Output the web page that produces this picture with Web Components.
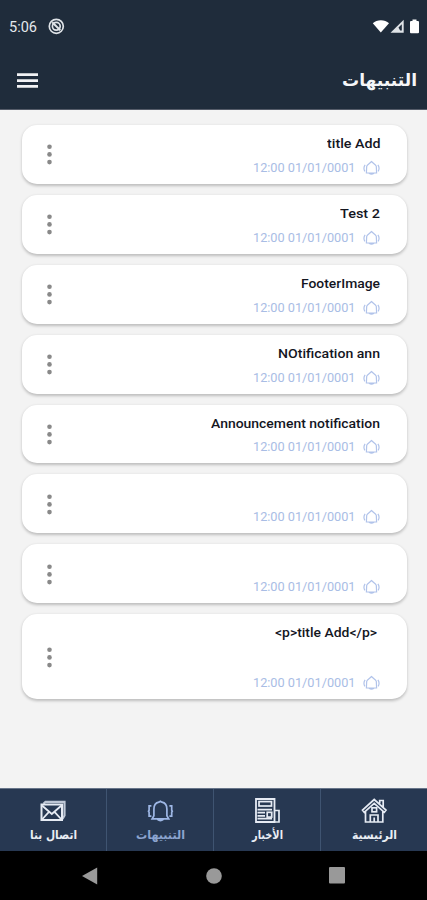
<!DOCTYPE html>
<html lang="ar">
<head>
<meta charset="utf-8">
<title>التنبيهات</title>
<style>
body{margin:0;background:#f3f3f3;font-family:Roboto,"DejaVu Sans",sans-serif}
</style>
</head>
<body>
<notifications-app></notifications-app>
<script>
const define=(name,html,setup)=>customElements.define(name,class extends HTMLElement{
  connectedCallback(){
    if(this.shadowRoot)return;
    const t=document.createElement('template');
    t.innerHTML=html;
    this.attachShadow({mode:'open'}).append(t.content.cloneNode(true));
    if(setup)setup(this,this.shadowRoot);
  }
});

/* A single line of text condensed or widened to the width in its "w" attribute. */
define('fit-text',`<style>
:host{display:block;white-space:nowrap;direction:ltr}
span{display:inline-block;transform-origin:0 50%}
</style><span></span>`,(el,root)=>{
  const s=root.querySelector('span'),w=+el.getAttribute('w');
  s.textContent=el.getAttribute('text');
  el.style.width=w+'px';
  s.style.transform='scaleX('+w/s.getBoundingClientRect().width+')';
});

define('status-bar',`<style>
:host{display:flex;height:52px;box-sizing:border-box;padding:1px 5px 0 9px;align-items:center;color:#e4e8ec;font-size:15.5px}
.sp{flex:1}svg{display:block}.dnd{margin-left:11px}
</style>
<fit-text w="28" text="5:06"></fit-text>
<svg class="dnd" width="17" height="17" viewBox="0 0 17 17" fill="none" stroke="#dfe3e7"><circle cx="8.3" cy="8.3" r="7" stroke-width="1.7"/><circle cx="8.3" cy="8.3" r="3.9" stroke-width="1.7"/><path d="M4.2 4.2 12.3 12.3" stroke-width="2"/></svg>
<span class="sp"></span>
<svg width="50" height="18" viewBox="0 0 50 18"><path d="M.8 5.2C4.8 1.2 13 1.2 17 5.2L8.8 14.5Z" fill="#fff"/><path d="M31.7 1.8V14.8H18.5Z" fill="#dfe3e7"/><path d="M26.5 9.5 29.8 6.3V12.6H28.2Z" fill="#1f2c3b"/><path d="M38 4.2Q38 3 39 3h1.5V1.5h4V3H46Q47 3 47 4.2V14.3Q47 15.3 46 15.3H39Q38 15.3 38 14.3Z" fill="#fff"/></svg>`);

define('app-header',`<style>
:host{display:flex;height:58px;box-sizing:border-box;padding:0 10.5px 1px 17px;align-items:center;justify-content:space-between;color:#f5f6f8;font:bold 17.5px/30px "DejaVu Sans",sans-serif;border-bottom:1px solid #555c69}
svg{display:block}
</style>
<svg width="21" height="17" viewBox="0 0 21 17" fill="#f1f2f4"><path d="M0 1.2h21v2.7H0zM0 7.2h21v2.7H0zM0 13h21v2.7H0z"/></svg>
<fit-text w="75" text="التنبيهات"></fit-text>`);

define('notification-card',`<style>
:host{display:flex;height:58.9px;box-sizing:border-box;align-items:center;justify-content:space-between;padding:0 26.5px 0 25px;background:#fff;border-radius:15px;box-shadow:0 1.5px 3px rgba(0,0,0,.22)}
:host([tall]){height:85px}
.body{display:flex;flex-direction:column;align-items:flex-end;justify-content:space-between;align-self:stretch;padding:9px 0 7px}
.title{height:19px;font:500 13px/19px Roboto,sans-serif;color:#14161f}
:host([tall]) .title{padding-right:3px}
.when{display:flex;align-items:center;gap:8px;height:18px;font:400 12.5px/18px Roboto,sans-serif;color:#a9bde5}
svg{display:block}
</style>
<svg width="5" height="22" viewBox="0 0 5 22" fill="#898989"><circle cx="2.5" cy="3.8" r="2.3"/><circle cx="2.5" cy="11.4" r="2.3"/><circle cx="2.5" cy="19.1" r="2.3"/></svg>
<div class="body"><div class="title"></div>
<div class="when"><fit-text w="102.5" text="12:00 01/01/0001"></fit-text>
<svg width="17" height="16" viewBox="0 0 17 16" fill="none" stroke="#b1c3ea" stroke-width="1.2"><path d="M3.4 13 3.7 6.3C4.2 4.6 6.3 3.8 8.5 1.5 10.7 3.8 12.8 4.6 13.3 6.3L13.6 13ZM6 13.2Q8.5 15.2 11 13.2"/><path d="M2.1 4.8Q-.1 8 1.9 11.4M14.9 4.8Q17.1 8 15.1 11.4"/></svg></div></div>`,(el,root)=>{
  const text=el.getAttribute('heading');
  if(!text)return;
  const f=document.createElement('fit-text');
  f.setAttribute('text',text);f.setAttribute('w',el.getAttribute('w'));
  root.querySelector('.title').append(f);
});

define('nav-tab',`<style>
:host{display:flex;flex:1;flex-direction:column;align-items:center;box-sizing:border-box;padding-top:8px;border-right:1px solid #3f5471;color:#e9edf4;font:bold 12px/20px "DejaVu Sans",sans-serif}
:host(:last-child){border-right:0}
:host([active]){color:#8ca4cf}
</style><slot></slot><div></div>`,(el,root)=>{
  const f=document.createElement('fit-text');
  f.setAttribute('text',el.getAttribute('label'));f.setAttribute('w',el.getAttribute('w'));
  root.querySelector('div').append(f);
});

define('bottom-nav',`<style>
:host{display:flex;height:63px;box-sizing:border-box;background:#273852;border-top:1px solid #67758a}
svg{display:block;fill:none;stroke:#e6ebf4;stroke-width:1.7}
</style>
<nav-tab label="اتصال بنا" w="47"><svg width="28" height="28" viewBox="0 0 28 28"><path d="M4.5 6.8 6.5 4.8H25.5V18.5L23.5 22" stroke="#bdc6d5" stroke-width="2.2"/><rect x="2.5" y="7.5" width="20.5" height="15.5" stroke-width="2"/><path d="M3 8.5 12.8 17 22.5 8.5M3 22.5 10 14.8M22.5 22.5 15.5 14.8" stroke-width="1.8"/></svg></nav-tab>
<nav-tab active label="التنبيهات" w="49"><svg width="28" height="28" viewBox="0 0 28 28" style="stroke:#9eb7e5"><g transform="translate(.9 .3)"><path d="M5.2 21.6 7 18.5V12C7 7.5 9.5 5.3 12 4.9L13.5 3.9 15 4.9C17.5 5.3 20 7.5 20 12V18.5l1.8 3.1ZM10.5 22Q13.5 24.4 16.5 22M4.5 8.5H2.2V13L1.6 14 2.2 15V18.8H4.5M22.5 8.5H24.8V13L25.4 14 24.8 15V18.8H22.5"/></g></svg></nav-tab>
<nav-tab label="الأخبار" w="31"><svg width="28" height="28" viewBox="0 0 28 28"><path d="M3 2H21.5V25H3Z" stroke-width="1.8"/><path d="M21.5 13.5H26V25H19"/><rect x="6" y="4.6" width="12.5" height="4.4"/><path d="M4.5 12.6H19M4.5 15.7H12M4.5 18.8H12M4.5 21.7H19"/><rect x="14.2" y="15.3" width="4.5" height="4.8"/></svg></nav-tab>
<nav-tab label="الرئيسية" w="45"><svg width="28" height="28" viewBox="0 0 28 28"><path d="M2.5 13.2 14.2 2.5 26 13.2 24.3 15.3 14.2 6.3 4.2 15.3ZM5.5 14.5V25H22.8V14.5M19.7 6.5V3.5H23.2V10"/><path d="M10.3 25V18H18V25M14.2 20.5V25"/><rect x="12" y="10.8" width="4.6" height="4"/></svg></nav-tab>`);

define('system-nav',`<style>
:host{display:flex;height:49px;background:#000;align-items:center;justify-content:space-between;padding:0 82px 0 82px}
svg{display:block;fill:#999}
</style>
<svg width="16" height="18" viewBox="0 0 16 18"><path d="M15.2.5V17.5L0 9Z"/></svg>
<svg width="16" height="16" viewBox="0 0 16 16"><circle cx="8" cy="8" r="7.8"/></svg>
<svg width="16" height="17" viewBox="0 0 16 17"><rect width="16" height="16.5" rx="1"/></svg>`);

define('notifications-app',`<style>
:host{display:flex;flex-direction:column;width:427px;height:900px;overflow:hidden;background:#f3f3f3}
header{background:#1f2c3b}
main{flex:1;display:flex;flex-direction:column;gap:11px;padding:15px 20.5px 0 22px}
</style>
<header><status-bar></status-bar><app-header></app-header></header>
<main>
<notification-card heading="title Add" w="53.5"></notification-card>
<notification-card heading="Test 2" w="40"></notification-card>
<notification-card heading="FooterImage" w="79"></notification-card>
<notification-card heading="NOtification ann" w="102"></notification-card>
<notification-card heading="Announcement notification" w="169"></notification-card>
<notification-card></notification-card>
<notification-card></notification-card>
<notification-card tall heading="&lt;p&gt;title Add&lt;/p&gt;" w="102"></notification-card>
</main>
<bottom-nav></bottom-nav>
<system-nav></system-nav>`);
</script>
</body>
</html>
